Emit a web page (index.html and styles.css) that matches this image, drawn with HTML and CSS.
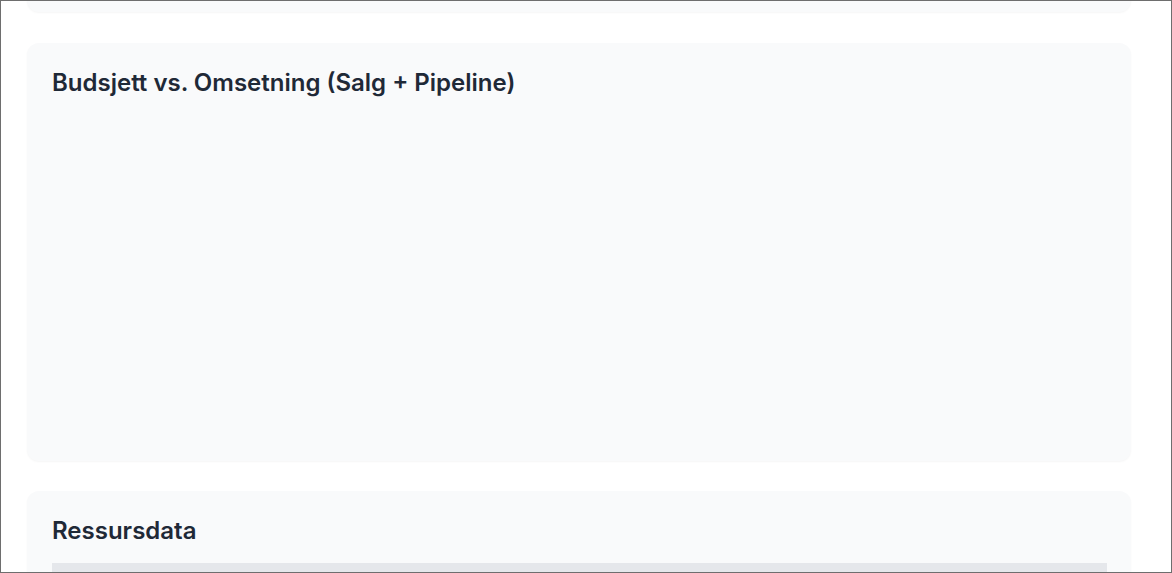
FILE: index.html
```html
<!DOCTYPE html>
<html lang="no">
<head>
<meta charset="utf-8">
<title>Dashboard</title>
<link rel="stylesheet" href="styles.css">
</head>
<body>
<div class="frame">
  <main class="content">
    <section class="card card-top"></section>
    <section class="card card-chart">
      <h2 class="card-title">Budsjett vs. Omsetning (Salg + Pipeline)</h2>
      <div class="chart-area"></div>
    </section>
    <section class="card card-table">
      <h2 class="card-title">Ressursdata</h2>
      <div class="table-head"></div>
    </section>
  </main>
</div>
</body>
</html>
```
FILE: styles.css
```css
* { box-sizing: border-box; }
html, body { margin: 0; padding: 0; background: #ffffff; }
body {
  font-family: Inter, "Noto Sans", "Liberation Sans", sans-serif;
  color: #1f2937;
}
.frame {
  width: 1172px;
  height: 573px;
  border: 1px solid #6e6e6e;
  overflow: hidden;
  background: #ffffff;
}
.content {
  display: flex;
  flex-direction: column;
  gap: 30px;
  padding: 0 40px 0 26px;
  margin-top: -189px;
}
.card {
  background: #f9fafb;
  border-radius: 12px;
  box-shadow: 0 1px 2px rgba(0, 0, 0, 0.04);
  padding: 24px 24px 24px 25px;
}
.card-top { height: 200px; margin-bottom: 1px; }
.card-chart { height: 418px; }
.card-table { height: 300px; }
.card-title {
  margin: 0 0 16px;
  font-size: 24px;
  line-height: 32px;
  font-weight: 600;
  color: #1f2937;
}
.chart-area { height: 322px; }
.table-head {
  height: 40px;
  background: #e5e7eb;
}
```
